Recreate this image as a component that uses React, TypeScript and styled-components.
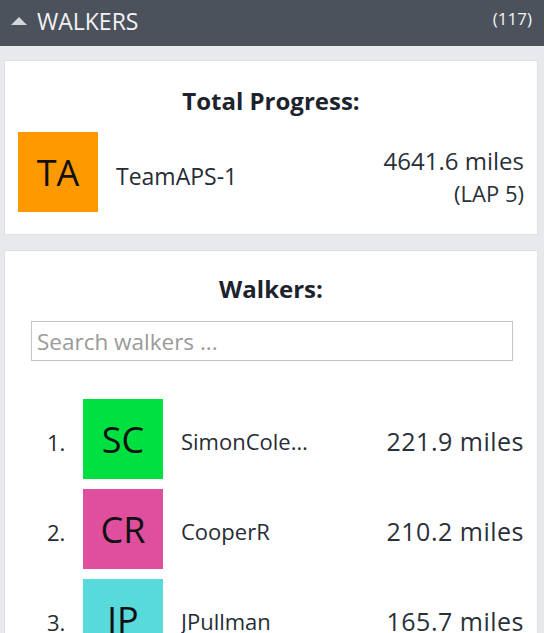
import React from "react";
import styled, { createGlobalStyle } from "styled-components";

const Global = createGlobalStyle`
  html, body { margin: 0; padding: 0; background: #e8e9ec; }
  body { font-family: "Open Sans", "Noto Sans", sans-serif; color: #222831; }
  * { box-sizing: border-box; }
`;

const Page = styled.div`
  width: 544px;
  min-height: 633px;
  background: #e8e9ec;
  display: flex;
  flex-direction: column;
`;

const Header = styled.header`
  height: 46px;
  background: #4b525c;
  display: flex;
  align-items: flex-start;
  padding: 0 12px 0 11px;
  color: #f2f3f5;
`;

const Caret = styled.span`
  width: 0;
  height: 0;
  border-left: 8px solid transparent;
  border-right: 8px solid transparent;
  border-bottom: 8px solid #d3d6da;
  margin-top: 17px;
  margin-right: 10px;
`;

const Title = styled.span`
  font-size: 23px;
  line-height: 24px;
  margin-top: 9px;
  flex: 1;
`;

const Count = styled.span`
  font-size: 17px;
  line-height: 20px;
  margin-top: 9px;
`;

const Body = styled.div`
  display: flex;
  flex-direction: column;
  gap: 15px;
  padding: 14px 6px 0 4px;
`;

const Card = styled.section<{ $top: number }>`
  background: #fff;
  border: 1px solid #dfe1e4;
  padding: ${(p) => p.$top}px 13px 22px 13px;
  display: flex;
  flex-direction: column;
`;

const Heading = styled.h2`
  margin: 0;
  text-align: center;
  font-size: 24px;
  line-height: 30px;
  font-weight: 700;
  color: #1d232c;
`;

const TeamRow = styled.div`
  display: flex;
  align-items: center;
  margin-top: 16px;
`;

const Avatar = styled.div<{ $bg: string }>`
  width: 80px;
  height: 80px;
  flex: none;
  background: ${(p) => p.$bg};
  color: #111;
  font-size: 36px;
  display: flex;
  align-items: center;
  justify-content: center;
  font-weight: 400;
`;

const Name = styled.span<{ $size: number }>`
  font-size: ${(p) => p.$size}px;
  margin-left: 18px;
  padding-top: 8px;
  flex: 1;
  min-width: 0;
  white-space: nowrap;
  overflow: hidden;
  text-overflow: ellipsis;
  color: #262c35;
`;

const Progress = styled.div`
  text-align: right;
  margin-top: 10px;
  color: #2a3039;
`;

const Miles = styled.div`
  font-size: 24px;
  line-height: 32px;
`;

const Lap = styled.div`
  font-size: 22px;
  line-height: 32px;
`;

const Search = styled.input`
  margin: 17px 11px 0 13px;
  height: 40px;
  border: 1px solid #c4c4c4;
  padding: 0 5px;
  font-family: inherit;
  font-size: 22.5px;
  color: #333;
  outline: none;
  &::placeholder { color: #9a9a9a; }
`;

const List = styled.ol`
  list-style: none;
  margin: 38px 0 0 0;
  padding: 0 0 0 17px;
  display: flex;
  flex-direction: column;
  gap: 10px;
`;

const Item = styled.li`
  display: flex;
  align-items: center;
`;

const Rank = styled.span`
  width: 36px;
  margin-left: 12px;
  padding-top: 5px;
  font-size: 22px;
  color: #262c35;
`;

const WalkerName = styled(Name)`
  flex: none;
  width: 134px;
  padding-top: 4px;
`;

const WalkerMiles = styled.span`
  margin-left: auto;
  padding-top: 4px;
  font-size: 25px;
  letter-spacing: 0.5px;
  color: #2a3039;
`;

const walkers = [
  { rank: 1, init: "SC", bg: "#00e040", name: "SimonColeman", miles: "221.9" },
  { rank: 2, init: "CR", bg: "#e04f9d", name: "CooperR", miles: "210.2" },
  { rank: 3, init: "JP", bg: "#58d9da", name: "JPullman", miles: "165.7" },
];

export default function App() {
  return (
    <Page>
      <Global />
      <Header>
        <Caret />
        <Title>WALKERS</Title>
        <Count>(117)</Count>
      </Header>
      <Body>
        <Card $top={25}>
          <Heading>Total Progress:</Heading>
          <TeamRow>
            <Avatar $bg="#ff9900">TA</Avatar>
            <Name $size={23}>TeamAPS-1</Name>
            <Progress>
              <Miles>4641.6 miles</Miles>
              <Lap>(LAP 5)</Lap>
            </Progress>
          </TeamRow>
        </Card>
        <Card $top={23}>
          <Heading>Walkers:</Heading>
          <Search placeholder="Search walkers ..." />
          <List>
            {walkers.map((w) => (
              <Item key={w.rank}>
                <Rank>{w.rank}.</Rank>
                <Avatar $bg={w.bg}>{w.init}</Avatar>
                <WalkerName $size={22}>{w.name}</WalkerName>
                <WalkerMiles>{w.miles} miles</WalkerMiles>
              </Item>
            ))}
          </List>
        </Card>
      </Body>
    </Page>
  );
}
